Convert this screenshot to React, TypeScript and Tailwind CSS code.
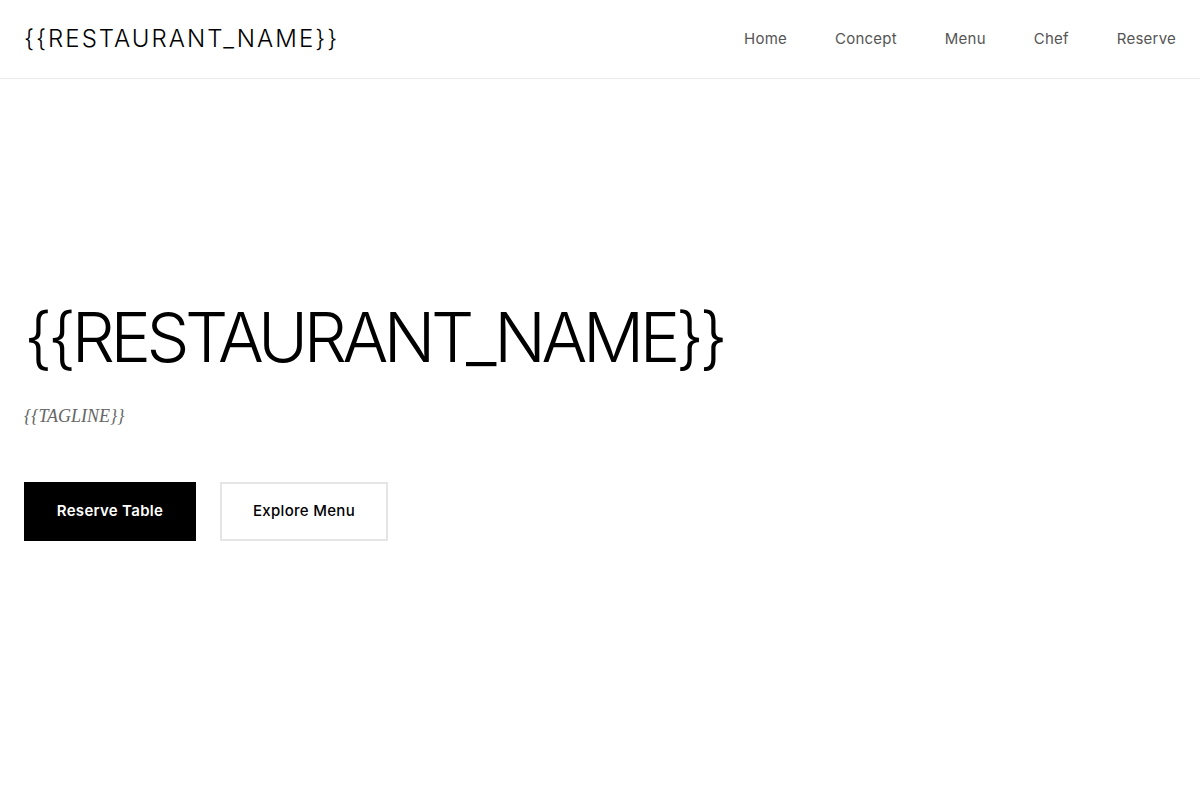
import * as React from "react"

const navLinks = ["Home", "Concept", "Menu", "Chef", "Reserve"]

export default function App() {
  return (
    <div className="min-h-screen bg-white font-['Inter',sans-serif] text-black">
      <header className="flex h-[79px] items-center justify-between border-b border-[#ececec] px-6">
        <a href="#" className="text-[24px] font-light tracking-[0.085em]">
          {"{{RESTAURANT_NAME}}"}
        </a>
        <nav className="flex items-center gap-12">
          {navLinks.map((link) => (
            <a key={link} href="#" className="text-[15px] tracking-[0.015em] text-[#555]">
              {link}
            </a>
          ))}
        </nav>
      </header>

      <main className="px-6 pt-[221px]">
        <h1 className="text-[68px] font-light leading-[1.1] tracking-[-0.065em]">
          {"{{RESTAURANT_NAME}}"}
        </h1>
        <p className="mt-[28px] font-['Liberation_Serif',serif] text-[18px] leading-[27px] italic text-[#666]">
          {"{{TAGLINE}}"}
        </p>
        <div className="mt-[52px] flex gap-6">
          <button className="h-[59px] w-[172px] bg-black text-[15px] font-semibold tracking-[0.02em] text-white">
            Reserve Table
          </button>
          <button className="h-[59px] w-[168px] border-2 border-[#e5e5e5] text-[15px] font-medium tracking-[0.02em] text-black">
            Explore Menu
          </button>
        </div>
      </main>
    </div>
  )
}
